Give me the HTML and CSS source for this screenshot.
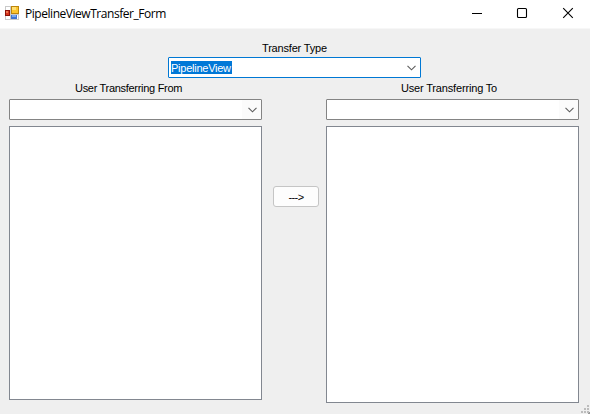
FILE: index.html
```html
<!DOCTYPE html>
<html lang="en">
<head>
<meta charset="utf-8">
<title>PipelineViewTransfer_Form</title>
<link rel="stylesheet" href="styles.css">
</head>
<body>
<div class="window">
  <header class="titlebar">
    <svg class="app-icon" width="14" height="14" viewBox="0 0 14 14" shape-rendering="crispEdges">
      <path d="M0 0h14v14H0z" fill="#c9c9c9"/>
      <path d="M1 1h4v3H1zM1 10h4v3H1zM12 9h1v4h-1z" fill="#fff"/>
      <path d="M0 4h5v6H0z" fill="#8c1208"/><path d="M1 5h3v4H1z" fill="#d8351c"/><path d="M1 5h2v2H1z" fill="#ef7754"/>
      <path d="M6 0h8v8H6z" fill="#bc850c"/><path d="M7 1h6v6H7z" fill="#fcc52d"/><path d="M7 1h4v3H7z" fill="#ffdf72"/>
      <path d="M6 9h6v4H6z" fill="#3f73d0"/><path d="M7 9h4v2H7z" fill="#77a8ef"/>
    </svg>
    <h1 class="title">PipelineViewTransfer_Form</h1>
    <div class="controls">
      <svg width="46" height="28" viewBox="0 0 46 28"><path d="M9 13.5h10" stroke="#000"/></svg>
      <svg width="46" height="28" viewBox="0 0 46 28"><rect x="8.5" y="8.5" width="9" height="9" rx="1" fill="none" stroke="#000" stroke-width="1.1"/></svg>
      <svg width="35" height="28" viewBox="0 0 35 28"><path d="M8.2 8.2l9.6 9.6M17.8 8.2l-9.6 9.6" stroke="#000" stroke-width="1.1"/></svg>
    </div>
  </header>
  <main class="form">
    <section class="type">
      <div class="label"><span class="type-label">Transfer Type</span></div>
      <div class="combo focused"><span class="selection">PipelineView</span><svg class="chevron" width="9" height="6" viewBox="0 0 9 6"><path d="M.5 .8l4 4 4-4"/></svg></div>
    </section>
    <div class="columns">
      <section class="column from">
        <div class="label"><span class="from-label">User Transferring From</span></div>
        <div class="combo"><svg class="chevron" width="9" height="6" viewBox="0 0 9 6"><path d="M.5 .8l4 4 4-4"/></svg></div>
        <div class="list"></div>
      </section>
      <button class="transfer">---&gt;</button>
      <section class="column to">
        <div class="label"><span class="to-label">User Transferring To</span></div>
        <div class="combo"><svg class="chevron" width="9" height="6" viewBox="0 0 9 6"><path d="M.5 .8l4 4 4-4"/></svg></div>
        <div class="list"></div>
      </section>
    </div>
    <svg class="grip" width="9" height="9" viewBox="0 0 9 9" shape-rendering="crispEdges"><path d="M6 0h2v2H6zM3 3h2v2H3zM6 3h2v2H6zM0 6h2v2H0zM3 6h2v2H3zM6 6h2v2H6z" fill="#bcbcbc"/><path d="M7 8h1V7h1v2H7z" fill="#999"/></svg>
  </main>
</div>
</body>
</html>
```
FILE: styles.css
```css
* { box-sizing: border-box; }
body { margin: 0; font: 11px/14px "Liberation Sans", Arial, sans-serif; color: #000; }
.window { position: relative; width: 590px; height: 414px; background: #efefef; overflow: hidden; }
.titlebar { display: flex; align-items: center; height: 29px; padding-left: 5px; background: #fff; border-bottom: 1px solid #f7f7f7; }
.app-icon { margin: 0 6px 2px 0; }
.title { margin: 0; font: 400 12px/16px "Open Sans", "Noto Sans", sans-serif; letter-spacing: -0.46px; white-space: nowrap; }
.controls { display: flex; margin-left: auto; }
.type { width: 253px; margin-left: 168px; padding-top: 12px; }
.label { height: 16px; white-space: nowrap; }
.label span { display: inline-block; }
.type-label { margin-left: 94px; letter-spacing: -0.18px; }
.from-label { margin-left: 66px; letter-spacing: -0.3px; }
.to-label { margin-left: 75px; letter-spacing: -0.17px; }
.combo { display: flex; align-items: center; justify-content: flex-end; height: 21px; padding: 0 4px 0 2px; background: linear-gradient(90deg, #fff 232px, #fbfbfb 232px); border: 1px solid #848484; border-radius: 1px; }
.combo.focused { justify-content: space-between; background: #fff; border-color: #0078d4; }
.selection { width: 61px; height: 13px; line-height: 14px; letter-spacing: -0.25px; color: #fff; background: #0078d7; white-space: nowrap; }
.chevron { fill: none; stroke: #5c5c5c; stroke-width: 1.1; }
.columns { display: flex; margin: 3px 11px 0 9px; }
.column { width: 253px; }
.column .label { height: 18px; }
.list { height: 274px; margin-top: 6px; background: #fff; border: 1px solid #828790; }
.to .list { height: 277px; }
.transfer { width: 46px; height: 21px; margin: 105px 7px 0 11px; padding: 0; background: #fdfdfd; border: 1px solid #c5c5c5; border-radius: 3px; font: inherit; letter-spacing: -0.6px; color: #000; }
.grip { position: absolute; right: 0; bottom: 0; }
```
